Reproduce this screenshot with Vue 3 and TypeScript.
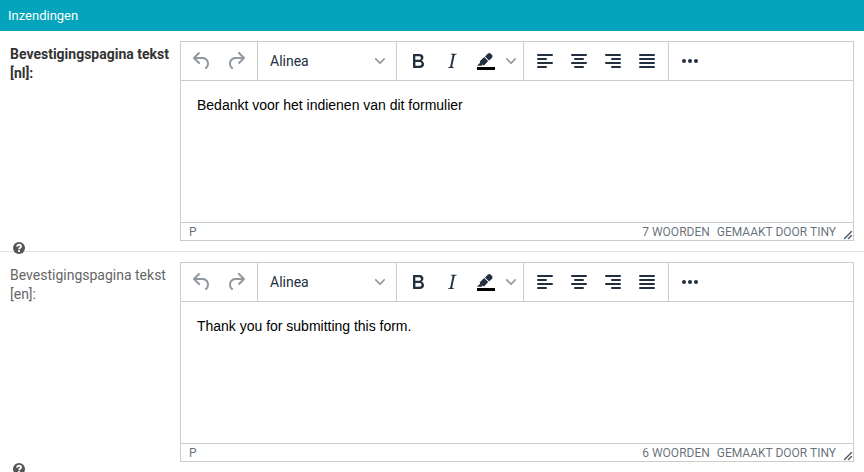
<script setup lang="ts">
interface Field {
  label: string
  lang: string
  text: string
  words: number
  active: boolean
}

const fields: Field[] = [
  { label: 'Bevestigingspagina tekst', lang: 'nl', text: 'Bedankt voor het indienen van dit formulier', words: 7, active: true },
  { label: 'Bevestigingspagina tekst', lang: 'en', text: 'Thank you for submitting this form.', words: 6, active: false },
]

const chevron =
  'M8.7 2.2c.3-.3.8-.3 1 0 .4.4.4.9 0 1.2L5.7 7.8c-.3.3-.9.3-1.2 0L.2 3.4a.8.8 0 010-1.2c.3-.3.8-.3 1.1 0L5 6l3.7-3.8z'

const history: string[] = [
  'M6.4 8H12c3.7 0 6.2 2 6.8 5.1.6 2.7-.4 5.6-2.3 6.8a1 1 0 01-1-1.8c1.1-.6 1.8-2.7 1.4-4.6-.5-2.1-2.1-3.5-4.9-3.5H6.4l3.3 3.3a1 1 0 11-1.4 1.4l-5-5a1 1 0 010-1.4l5-5a1 1 0 011.4 1.4L6.4 8z',
  'M17.6 10H12c-2.8 0-4.4 1.4-4.9 3.5-.4 2 .3 4 1.4 4.6a1 1 0 11-1 1.8c-2-1.2-2.9-4.1-2.3-6.8.6-3 3-5.1 6.8-5.1h5.6l-3.3-3.3a1 1 0 111.4-1.4l5 5a1 1 0 010 1.4l-5 5a1 1 0 01-1.4-1.4l3.3-3.3z',
]

const styles: string[] = [
  'M7.8 19c-.3 0-.5 0-.6-.2l-.2-.5V5.7c0-.2 0-.4.2-.5l.6-.2h5c1.5 0 2.7.3 3.5 1 .7.6 1.1 1.4 1.1 2.5a3 3 0 01-.6 1.9c-.4.6-1 1-1.6 1.2.4.1.9.3 1.3.6s.8.7 1 1.2c.4.4.5 1 .5 1.6 0 1.3-.4 2.3-1.3 3-.8.7-2.1 1-3.8 1H7.8zm5-8.3c.6 0 1.2-.1 1.6-.5.4-.3.6-.7.6-1.3 0-1.1-.8-1.7-2.3-1.7H9.3v3.5h3.4zm.5 6c.7 0 1.3-.1 1.7-.4.4-.4.6-.9.6-1.5s-.2-1-.7-1.4c-.4-.3-1-.4-2-.4H9.4v3.8h4z',
  'M16.7 4.7l-.1.9h-.3c-.6 0-1 0-1.4.3-.3.3-.4.6-.5 1.1l-2.1 9.8v.6c0 .5.4.8 1.4.8h.2l-.2.8H8l.2-.8h.2c1.1 0 1.8-.5 2-1.5l2-9.8.1-.5c0-.6-.4-.8-1.4-.8h-.3l.2-.9h5.8z',
]

const aligns: string[] = [
  'M5 5h14a1 1 0 010 2H5a1 1 0 110-2zm0 4h8a1 1 0 010 2H5a1 1 0 110-2zm0 8h8a1 1 0 010 2H5a1 1 0 010-2zm0-4h14a1 1 0 010 2H5a1 1 0 010-2z',
  'M5 5h14a1 1 0 010 2H5a1 1 0 110-2zm3 4h8a1 1 0 010 2H8a1 1 0 110-2zm0 8h8a1 1 0 010 2H8a1 1 0 010-2zm-3-4h14a1 1 0 010 2H5a1 1 0 010-2z',
  'M5 5h14a1 1 0 010 2H5a1 1 0 110-2zm6 4h8a1 1 0 010 2h-8a1 1 0 010-2zm0 8h8a1 1 0 010 2h-8a1 1 0 010-2zm-6-4h14a1 1 0 010 2H5a1 1 0 010-2z',
  'M5 5h14a1 1 0 010 2H5a1 1 0 110-2zm0 4h14a1 1 0 010 2H5a1 1 0 110-2zm0 4h14a1 1 0 010 2H5a1 1 0 010-2zm0 4h14a1 1 0 010 2H5a1 1 0 010-2z',
]
</script>

<template>
  <main class="page">
    <header class="header">Inzendingen</header>
    <section v-for="f in fields" :key="f.lang" class="row">
      <div class="side">
        <label class="label" :class="{ active: f.active }">{{ f.label }} [{{ f.lang }}]:</label>
        <svg class="help" viewBox="0 0 12 12">
          <circle cx="6" cy="6" r="6" />
          <path class="hook" d="M3.9 4.6C4.1 3.4 4.9 2.8 6 2.8c1.2 0 2 .7 2 1.6 0 1.3-1.9 1.3-1.9 2.8" />
          <rect class="dot" x="5.1" y="8" width="1.9" height="1.9" />
        </svg>
      </div>
      <div class="editor">
        <div class="toolbar">
          <div class="group">
            <button v-for="d in history" :key="d" class="tool disabled">
              <svg class="icon" viewBox="0 0 24 24"><path :d="d" /></svg>
            </button>
          </div>
          <div class="group">
            <button class="select">
              <span>Alinea</span>
              <svg class="chevron" viewBox="0 0 10 10"><path :d="chevron" /></svg>
            </button>
          </div>
          <div class="group">
            <button v-for="d in styles" :key="d" class="tool">
              <svg class="icon" viewBox="0 0 24 24"><path :d="d" /></svg>
            </button>
            <button class="tool">
              <svg class="icon" viewBox="0 0 24 24">
                <path class="swatch" d="M3 18h18v3H3z" />
                <path d="M7.7 16.7H3l3.3-3.3-.7-.8L10.2 8l4 4.1-4 4.2c-.2.2-.6.2-.8 0l-.6-.7-1.1 1.1zm5-7.5L11 7.4l3-2.9a2 2 0 012.6 0L18 6c.7.7.7 2 0 2.7l-2.9 2.9-1.8-1.8-.5-.6" />
              </svg>
            </button>
            <button class="tool split">
              <svg class="chevron" viewBox="0 0 10 10"><path :d="chevron" /></svg>
            </button>
          </div>
          <div class="group">
            <button v-for="d in aligns" :key="d" class="tool">
              <svg class="icon" viewBox="0 0 24 24"><path :d="d" /></svg>
            </button>
          </div>
          <div class="group">
            <button class="tool">
              <svg class="icon" viewBox="0 0 24 24">
                <circle cx="6" cy="12" r="2" /><circle cx="12" cy="12" r="2" /><circle cx="18" cy="12" r="2" />
              </svg>
            </button>
          </div>
        </div>
        <div class="content">{{ f.text }}</div>
        <footer class="status">
          <span class="path">P</span>
          <span class="words">{{ f.words }} WOORDEN</span>
          <span>GEMAAKT DOOR TINY</span>
          <svg class="resize" viewBox="0 0 10 10">
            <path d="M8.1 1.1A.5.5 0 119 2l-7 7A.5.5 0 111 8l7-7zM8.1 5.1A.5.5 0 119 6l-3 3A.5.5 0 115 8l3-3z" />
          </svg>
        </footer>
      </div>
    </section>
  </main>
</template>

<style>
body {
  background: #fff;
  overflow: hidden;
}
</style>

<style scoped>
.page {
  height: 472px;
  overflow: hidden;
  font-family: Roboto, sans-serif;
}
.header {
  box-sizing: border-box;
  height: 31px;
  padding-left: 8px;
  background: #04a5bc;
  color: #fff;
  font-size: 13px;
  line-height: 31px;
}
.row {
  box-sizing: border-box;
  display: flex;
  height: 221px;
  padding: 10px 10px 0;
  border-bottom: 1px solid #e0e0e0;
}
.side {
  display: flex;
  flex-direction: column;
  flex: none;
  justify-content: space-between;
  width: 170px;
  height: 213px;
}
.label {
  padding-top: 4px;
  color: #666;
  font-size: 14px;
  line-height: 19px;
}
.label.active {
  color: #333;
  font-weight: 700;
}
.help {
  position: relative;
  width: 12px;
  height: 12px;
  margin-left: 3px;
  fill: #555;
}
.hook {
  fill: none;
  stroke: #fff;
  stroke-width: 1.9;
}
.dot {
  fill: #fff;
}
.editor {
  box-sizing: border-box;
  display: flex;
  flex-direction: column;
  width: 674px;
  height: 200px;
  border: 1px solid #ccc;
}
.toolbar {
  display: flex;
  height: 38px;
  border-bottom: 1px solid #ccc;
}
.group {
  display: flex;
  align-items: center;
  padding: 0 4px;
  border-right: 1px solid #ccc;
}
.group:last-child {
  border-right: 0;
}
.tool {
  display: flex;
  align-items: center;
  justify-content: center;
  width: 34px;
  height: 34px;
  padding: 0;
  border: 0;
  background: none;
  fill: #222f3e;
}
.disabled {
  fill: rgba(34, 47, 62, 0.5);
}
.split {
  width: 16px;
}
.icon {
  width: 24px;
  height: 24px;
}
.swatch {
  fill: #000;
}
.chevron {
  width: 10px;
  height: 10px;
  fill: rgba(34, 47, 62, 0.5);
}
.select {
  display: flex;
  align-items: center;
  justify-content: space-between;
  width: 130px;
  height: 34px;
  padding: 0 7px 0 8px;
  border: 0;
  background: none;
  color: #222f3e;
  font: 14px Roboto, sans-serif;
}
.content {
  flex: 1;
  padding: 16px;
  color: #000;
  font-family: "Liberation Sans", Arial, sans-serif;
  font-size: 14px;
  line-height: 16px;
  letter-spacing: -0.01px;
}
.status {
  display: flex;
  height: 17px;
  padding-left: 8px;
  border-top: 1px solid #ccc;
  color: rgba(34, 47, 62, 0.7);
  font-size: 12px;
  line-height: 18px;
}
.path {
  flex: 1;
}
.words {
  margin-right: 7px;
}
.resize {
  align-self: flex-end;
  width: 10px;
  height: 10px;
  margin-left: 7px;
  fill: rgba(34, 47, 62, 0.8);
}
</style>
